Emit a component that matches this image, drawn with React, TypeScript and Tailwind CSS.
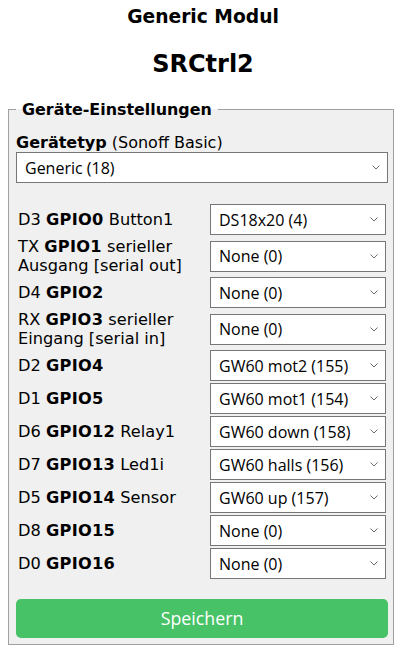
import React from "react";

type Row = { pre: string; gpio: string; post?: string; post2?: string; value: string };

const rows: Row[] = [
  { pre: "D3", gpio: "GPIO0", post: "Button1", value: "DS18x20 (4)" },
  { pre: "TX", gpio: "GPIO1", post: "serieller", post2: "Ausgang [serial out]", value: "None (0)" },
  { pre: "D4", gpio: "GPIO2", value: "None (0)" },
  { pre: "RX", gpio: "GPIO3", post: "serieller", post2: "Eingang [serial in]", value: "None (0)" },
  { pre: "D2", gpio: "GPIO4", value: "GW60 mot2 (155)" },
  { pre: "D1", gpio: "GPIO5", value: "GW60 mot1 (154)" },
  { pre: "D6", gpio: "GPIO12", post: "Relay1", value: "GW60 down (158)" },
  { pre: "D7", gpio: "GPIO13", post: "Led1i", value: "GW60 halls (156)" },
  { pre: "D5", gpio: "GPIO14", post: "Sensor", value: "GW60 up (157)" },
  { pre: "D8", gpio: "GPIO15", value: "None (0)" },
  { pre: "D0", gpio: "GPIO16", value: "None (0)" },
];

function Chevron() {
  return (
    <svg width="8" height="5" viewBox="0 0 8 5" className="shrink-0">
      <path d="M0.5 0.5 L4 4 L7.5 0.5" fill="none" stroke="#6b6b6b" strokeWidth="1" />
    </svg>
  );
}

function Select({ value, className }: { value: string; className: string }) {
  return (
    <div
      className={
        "flex items-center justify-between h-[31px] border border-[#767676] bg-white pl-[8px] pr-[7px] text-[16px] text-black font-['Open_Sans',sans-serif] " +
        className
      }
    >
      <span className="leading-[20px]">{value}</span>
      <Chevron />
    </div>
  );
}

export default function App() {
  return (
    <div className="w-[406px] h-[654px] bg-white text-black font-['DejaVu_Sans',Verdana,sans-serif] overflow-hidden">
      <div className="text-center pt-[6px]">
        <div className="text-[18.7px] leading-[22px] font-bold">Generic Modul</div>
        <div className="text-[24px] leading-[28px] font-bold mt-[22px]">SRCtrl2</div>
      </div>
      <fieldset className="ml-[8px] mt-[22px] w-[386px] border border-[#a0a0a0] bg-[#f0f0f0] pl-[7px] pr-[5px] pb-[6px] pt-[15px]">
        <legend className="px-[6px] text-[15.9px] leading-[19px] font-bold">Geräte-Einstellungen</legend>
        <div className="text-[16px] leading-[18px]">
          <b>Gerätetyp</b> (Sonoff Basic)
        </div>
        <Select value="Generic (18)" className="w-[372px]" />
        <div className="mt-[21px] flex flex-col gap-[2px] pl-[2px]">
          {rows.map((r) => (
            <div key={r.gpio} className="flex items-center gap-[2px]">
              <div className="w-[190px] text-[16.2px] leading-[19px]">
                {r.pre} <b className="tracking-[0.3px]">{r.gpio}</b>
                {r.post ? " " + r.post : ""}
                {r.post2 ? (
                  <>
                    <br />
                    {r.post2}
                  </>
                ) : null}
              </div>
              <Select value={r.value} className="w-[176px]" />
            </div>
          ))}
        </div>
        <button className="mt-[20px] w-[372px] h-[39px] rounded-[5px] bg-[#47c266] text-white text-[17.8px] font-['Open_Sans',sans-serif] leading-[39px]">
          Speichern
        </button>
      </fieldset>
    </div>
  );
}
